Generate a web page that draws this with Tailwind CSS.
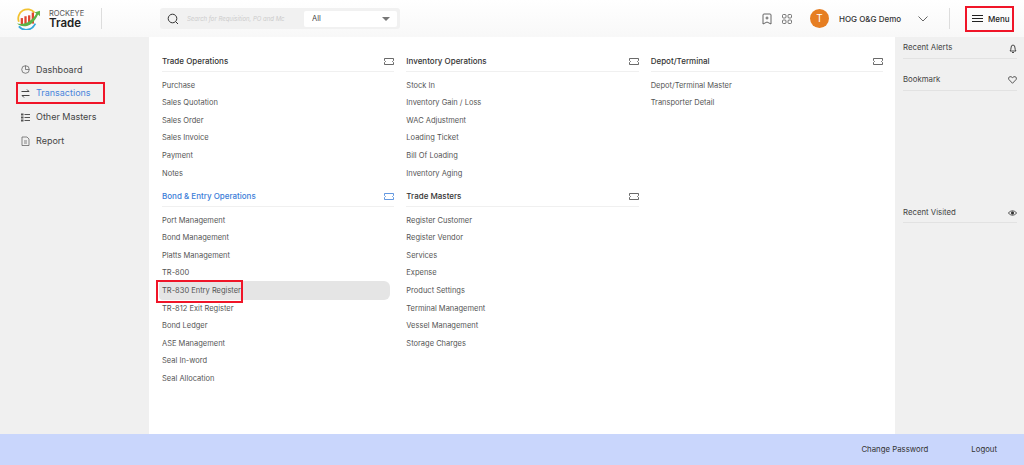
<!DOCTYPE html>
<html lang="en">
<head>
    <meta charset="UTF-8">
    <title>Rockeye Trade</title>
    <script src="https://cdn.jsdelivr.net/npm/@tailwindcss/browser@4"></script>
</head>
<body class="bg-white font-['Inter',sans-serif] text-[#333]">
<div class="w-[1024px] h-[465px] flex flex-col overflow-hidden">

    <!-- header -->
    <header class="h-[37px] shrink-0 flex items-center bg-gradient-to-b from-white to-[#f8f8f8]">
        <div class="w-[159px] h-full flex items-center pl-[15px] shrink-0">
            <svg width="27" height="22" viewBox="0 0 27 24" class="shrink-0">
                <path d="M3 15 A10 10 0 0 1 20 5" fill="none" stroke="#f2c230" stroke-width="2"/>
                <rect x="5" y="11" width="2.5" height="8" fill="#e0452f"/>
                <rect x="9" y="9" width="2.5" height="10" fill="#e0452f"/>
                <rect x="13" y="8" width="2.5" height="10" fill="#e0452f"/>
                <rect x="17" y="5" width="2.5" height="12" fill="#e0452f"/>
                <path d="M1 17 C8 23 18 20 24 7 L26 9 L26 3 L20 5 L22 6 C17 15 9 19 1 17Z" fill="#5cb346"/>
                <path d="M3 20 C8 26 17 25 21 17" fill="none" stroke="#35a7dc" stroke-width="2"/>
            </svg>
            <div class="ml-[7px] pt-[2px] flex flex-col leading-none">
                <span class="text-[7.5px] text-[#555]">ROCKEYE</span>
                <span class="text-[11.5px] font-semibold text-[#222] mt-[1px]">Trade</span>
            </div>
            <div class="ml-[17px] w-px h-[21px] bg-[#ddd]"></div>
        </div>
        <div class="w-[240px] h-[21px] bg-[#f1f1f1] rounded-[3px] flex items-center ml-px pl-[7px] pr-[3px] shrink-0">
            <svg width="12" height="12" viewBox="0 0 12 12" fill="none" stroke="#333" stroke-width="1" class="shrink-0">
                <circle cx="5.5" cy="5.5" r="4.3"/><path d="M8.7 8.7 L11 11"/>
            </svg>
            <span class="ml-[8px] w-[117px] text-[6px] italic text-[#ccc] whitespace-nowrap overflow-hidden">Search for Requisition, PO and Mc</span>
            <div class="flex-1 h-[16px] bg-white rounded-[2px] flex items-center justify-between pl-[8px] pr-[7px]">
                <span class="text-[7.5px] text-[#444]">All</span>
                <span class="w-0 h-0 border-x-[4px] border-x-transparent border-t-[4px] border-t-[#777]"></span>
            </div>
        </div>
        <div class="ml-auto flex items-center">
            <svg width="10" height="12" viewBox="0 0 10 12" fill="none" stroke="#555" stroke-width="0.9">
                <path d="M1 2 Q1 1 2 1 H8 Q9 1 9 2 V11 L5 9 L1 11 Z"/><path d="M5 3.5 V6.5 M3.5 5 H6.5"/>
            </svg>
            <svg width="10" height="10" viewBox="0 0 10 10" fill="none" stroke="#555" stroke-width="0.8" class="ml-[10px]">
                <rect x="0.5" y="0.5" width="3.5" height="3.5" rx="1"/><rect x="6" y="0.5" width="3.5" height="3.5" rx="1"/>
                <rect x="0.5" y="6" width="3.5" height="3.5" rx="1"/><rect x="6" y="6" width="3.5" height="3.5" rx="1"/>
            </svg>
            <div class="ml-[18px] w-[19px] h-[19px] rounded-full bg-[#e67e22] text-white text-[10px] flex items-center justify-center">T</div>
            <span class="ml-[10px] w-[74px] text-[8px] font-medium text-[#333] whitespace-nowrap">HOG O&amp;G Demo</span>
            <svg width="10" height="6" viewBox="0 0 10 6" fill="none" stroke="#555" stroke-width="0.9" class="ml-[5px]">
                <path d="M0.5 0.5 L5 5 L9.5 0.5"/>
            </svg>
            <div class="ml-[21px] w-px h-[21px] bg-[#ddd]"></div>
            <div class="ml-[15px] mr-[10px] w-[49px] h-[26px] border-2 border-[#f01528] flex items-center pl-[5px]">
                <span class="flex flex-col gap-[2px] w-[11px]">
                    <span class="h-px bg-[#222]"></span><span class="h-px bg-[#222]"></span><span class="h-px bg-[#222]"></span>
                </span>
                <span class="ml-[5px] text-[8px] font-medium text-[#222]">Menu</span>
            </div>
        </div>
    </header>

    <div class="flex flex-1 min-h-0">
        <!-- left nav -->
        <nav class="w-[149px] shrink-0 bg-[#f0f0f0] pl-[16px] pr-[44px] pt-[20px] text-[9px]">
            <div class="h-[25px] flex items-center pl-[5px] text-[#444]">
                <svg width="9" height="9" viewBox="0 0 9 9" fill="none" stroke="#555" stroke-width="0.7"><circle cx="4.5" cy="4.5" r="3.8"/><path d="M4.5 0.7 V4.5 H8.3"/></svg>
                <span class="ml-[6px]">Dashboard</span>
            </div>
            <div class="h-[22px] flex items-center pl-[3px] border-2 border-[#f01528] text-[#4a86dc]">
                <svg width="9" height="9" viewBox="0 0 9 9" fill="none" stroke="#444" stroke-width="1"><path d="M0.5 2.5 H8 L6 0.5 M8.5 6.5 H1 L3 8.5"/></svg>
                <span class="ml-[6px]">Transactions</span>
            </div>
            <div class="h-[26px] flex items-center pl-[5px] text-[#444]">
                <svg width="9" height="9" viewBox="0 0 9 9" fill="none" stroke="#555" stroke-width="1"><path d="M3.5 1.5 H9 M3.5 4.5 H9 M3.5 7.5 H9"/><path d="M0 1.5 H2.5 M0 4.5 H2.5 M0 7.5 H2.5" stroke-width="2"/></svg>
                <span class="ml-[6px]">Other Masters</span>
            </div>
            <div class="h-[22px] flex items-center pl-[5px] text-[#444]">
                <svg width="9" height="10" viewBox="0 0 9 10" fill="none" stroke="#555" stroke-width="0.7"><path d="M1 1 H6 L8 3 V9.5 H1 Z M3 5 H6 M3 7 H6"/></svg>
                <span class="ml-[6px]">Report</span>
            </div>
        </nav>

        <!-- menu columns -->
        <main class="flex-1 grid grid-cols-3 gap-x-[12px] pl-[13px] pr-[12px] pt-[14px] content-start">
            <div>
                <section>
                    <div class="h-[21px] flex items-center justify-between border-b border-[#f0f0f0] text-[8px] font-medium text-[#333]">
                        <span>Trade Operations</span>
                        <svg width="10" height="7" viewBox="0 0 10 7" fill="none" stroke="#444" stroke-width="0.8"><path d="M0.5 0.5 H9.5 V2.5 Q7.5 3.5 9.5 4.5 V6.5 H0.5 V4.5 Q2.5 3.5 0.5 2.5 Z"/></svg>
                    </div>
                    <ul class="pt-[4.5px] text-[7.5px] text-[#555]">
                        <li class="h-[17.6px] flex items-center">Purchase</li>
                        <li class="h-[17.6px] flex items-center">Sales Quotation</li>
                        <li class="h-[17.6px] flex items-center">Sales Order</li>
                        <li class="h-[17.6px] flex items-center">Sales Invoice</li>
                        <li class="h-[17.6px] flex items-center">Payment</li>
                        <li class="h-[17.6px] flex items-center">Notes</li>
                    </ul>
                </section>
                <section class="mt-[4.9px]">
                    <div class="h-[20px] flex items-center justify-between border-b border-[#f0f0f0] text-[8px] font-medium text-[#3b7dd8]">
                        <span>Bond &amp; Entry Operations</span>
                        <svg width="10" height="7" viewBox="0 0 10 7" fill="none" stroke="#3b7dd8" stroke-width="0.8"><path d="M0.5 0.5 H9.5 V2.5 Q7.5 3.5 9.5 4.5 V6.5 H0.5 V4.5 Q2.5 3.5 0.5 2.5 Z"/></svg>
                    </div>
                    <ul class="pt-[4.5px] text-[7.5px] text-[#555]">
                        <li class="h-[17.6px] flex items-center">Port Management</li>
                        <li class="h-[17.6px] flex items-center">Bond Management</li>
                        <li class="h-[17.6px] flex items-center">Platts Management</li>
                        <li class="h-[17.6px] flex items-center">TR-800</li>
                        <li class="relative h-[19px] -my-[0.7px] flex items-center bg-[#e5e5e5] rounded-r-[6px] rounded-l-[4px] -ml-[3px] pl-[3px] mr-[4px]">
                            TR-830 Entry Register
                            <span class="absolute -left-[3px] -top-[1px] w-[87px] h-[23px] border-2 border-[#f01528]"></span>
                        </li>
                        <li class="h-[17.6px] flex items-center">TR-812 Exit Register</li>
                        <li class="h-[17.6px] flex items-center">Bond Ledger</li>
                        <li class="h-[17.6px] flex items-center">ASE Management</li>
                        <li class="h-[17.6px] flex items-center">Seal In-word</li>
                        <li class="h-[17.6px] flex items-center">Seal Allocation</li>
                    </ul>
                </section>
            </div>
            <div>
                <section>
                    <div class="h-[21px] flex items-center justify-between border-b border-[#f0f0f0] text-[8px] font-medium text-[#333]">
                        <span>Inventory Operations</span>
                        <svg width="10" height="7" viewBox="0 0 10 7" fill="none" stroke="#444" stroke-width="0.8"><path d="M0.5 0.5 H9.5 V2.5 Q7.5 3.5 9.5 4.5 V6.5 H0.5 V4.5 Q2.5 3.5 0.5 2.5 Z"/></svg>
                    </div>
                    <ul class="pt-[4.5px] text-[7.5px] text-[#555]">
                        <li class="h-[17.6px] flex items-center">Stock In</li>
                        <li class="h-[17.6px] flex items-center">Inventory Gain / Loss</li>
                        <li class="h-[17.6px] flex items-center">WAC Adjustment</li>
                        <li class="h-[17.6px] flex items-center">Loading Ticket</li>
                        <li class="h-[17.6px] flex items-center">Bill Of Loading</li>
                        <li class="h-[17.6px] flex items-center">Inventory Aging</li>
                    </ul>
                </section>
                <section class="mt-[4.9px]">
                    <div class="h-[20px] flex items-center justify-between border-b border-[#f0f0f0] text-[8px] font-medium text-[#333]">
                        <span>Trade Masters</span>
                        <svg width="10" height="7" viewBox="0 0 10 7" fill="none" stroke="#444" stroke-width="0.8"><path d="M0.5 0.5 H9.5 V2.5 Q7.5 3.5 9.5 4.5 V6.5 H0.5 V4.5 Q2.5 3.5 0.5 2.5 Z"/></svg>
                    </div>
                    <ul class="pt-[4.5px] text-[7.5px] text-[#555]">
                        <li class="h-[17.6px] flex items-center">Register Customer</li>
                        <li class="h-[17.6px] flex items-center">Register Vendor</li>
                        <li class="h-[17.6px] flex items-center">Services</li>
                        <li class="h-[17.6px] flex items-center">Expense</li>
                        <li class="h-[17.6px] flex items-center">Product Settings</li>
                        <li class="h-[17.6px] flex items-center">Terminal Management</li>
                        <li class="h-[17.6px] flex items-center">Vessel Management</li>
                        <li class="h-[17.6px] flex items-center">Storage Charges</li>
                    </ul>
                </section>
            </div>
            <div>
                <section>
                    <div class="h-[21px] flex items-center justify-between border-b border-[#f0f0f0] text-[8px] font-medium text-[#333]">
                        <span>Depot/Terminal</span>
                        <svg width="10" height="7" viewBox="0 0 10 7" fill="none" stroke="#444" stroke-width="0.8"><path d="M0.5 0.5 H9.5 V2.5 Q7.5 3.5 9.5 4.5 V6.5 H0.5 V4.5 Q2.5 3.5 0.5 2.5 Z"/></svg>
                    </div>
                    <ul class="pt-[4.5px] text-[7.5px] text-[#555]">
                        <li class="h-[17.6px] flex items-center">Depot/Terminal Master</li>
                        <li class="h-[17.6px] flex items-center">Transporter Detail</li>
                    </ul>
                </section>
            </div>
        </main>

        <!-- right panel -->
        <aside class="w-[129px] shrink-0 bg-[#f0f0f0] pl-[8px] pr-[7px] text-[7.8px] text-[#444]">
            <div class="h-[22px] pt-[1px] flex items-center justify-between border-b border-[#e2e2e2]">
                <span>Recent Alerts</span>
                <svg width="8" height="9" viewBox="0 0 8 9" fill="none" stroke="#333" stroke-width="0.9"><path d="M1 7 Q2 6 2 4 Q2 1 4 1 Q6 1 6 4 Q6 6 7 7 Z M3 8.5 H5"/></svg>
            </div>
            <div class="mt-[10px] h-[22px] pt-[1px] flex items-center justify-between border-b border-[#e2e2e2]">
                <span>Bookmark</span>
                <svg width="9" height="8" viewBox="0 0 9 8" fill="none" stroke="#333" stroke-width="0.8"><path d="M4.5 7.3 L0.9 3.5 Q0 2 1.3 0.9 Q3 0 4.5 1.6 Q6 0 7.7 0.9 Q9 2 8.1 3.5 Z"/></svg>
            </div>
            <div class="mt-[110px] h-[22px] pt-[2px] flex items-center justify-between border-b border-[#e2e2e2]">
                <span>Recent Visited</span>
                <svg width="9" height="6" viewBox="0 0 9 6" fill="none" stroke="#333" stroke-width="0.8"><path d="M0.3 3 Q4.5 -1.5 8.7 3 Q4.5 7.5 0.3 3 Z"/><circle cx="4.5" cy="3" r="1.2" fill="#333"/></svg>
            </div>
        </aside>
    </div>

    <!-- footer -->
    <footer class="h-[31px] shrink-0 bg-[#c9d6fc] flex items-center justify-end pr-[27px] text-[7.8px] text-[#333]">
        <span>Change Password</span>
        <span class="ml-[43px]">Logout</span>
    </footer>
</div>
</body>
</html>
